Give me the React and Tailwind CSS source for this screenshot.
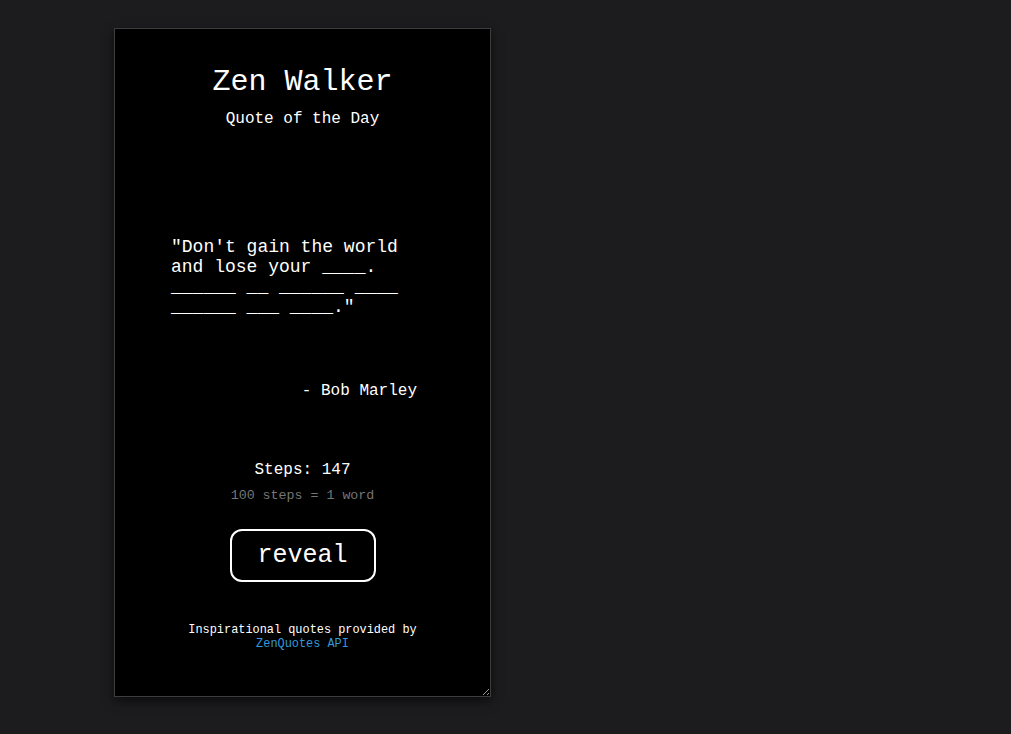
import React from "react";

const mono = { fontFamily: '"Liberation Mono", "Courier New", monospace' };

const App = () => {
  const quote =
    "\"Don't gain the world and lose your ____. ______ __ ______ ____ ______ ___ ____.\"";

  return (
    <div className="min-h-[734px] bg-[#1c1c1e] pt-[28px] pl-[114px]" style={mono}>
      <div className="resize overflow-auto w-[377px] h-[669px] bg-black border border-[#3d3d3d] shadow-[0_4px_10px_rgba(0,0,0,0.6)] text-white flex flex-col items-center">
        <h1 className="mt-[36px] text-[30px] leading-[34px]">Zen Walker</h1>
        <p className="mt-[11px] text-[16px] leading-[18px]">Quote of the Day</p>

        <div className="mt-[109px] w-[246px] ml-[-17px]">
          <p className="text-[18px] leading-[20px]">{quote}</p>
          <p className="mt-[65px] text-right text-[16px] leading-[18px]">- Bob Marley</p>
        </div>

        <p className="mt-[61px] text-[16px] leading-[18px]">Steps: 147</p>
        <p className="mt-[9px] text-[13.3px] leading-[15px] text-[#767676]">100 steps = 1 word</p>

        <button className="mt-[26px] w-[146px] h-[53px] border-2 border-white rounded-[12px] text-[25px] text-white bg-black">
          reveal
        </button>

        <div className="mt-[41px] text-[11.9px] leading-[14px] text-center">
          <p>Inspirational quotes provided by</p>
          <a className="text-[#3498db]">ZenQuotes API</a>
        </div>
      </div>
    </div>
  );
};

export default App;
